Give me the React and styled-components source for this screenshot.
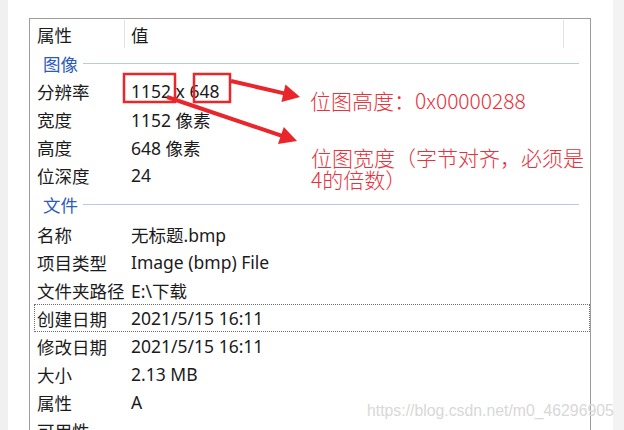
import React from 'react';
import styled, { createGlobalStyle } from 'styled-components';

const Global = createGlobalStyle`
  html, body { margin: 0; padding: 0; background: #fff; }
  body { font-family: "Noto Sans", "Noto Sans CJK SC", sans-serif; }
`;

const Page = styled.div`
  position: relative;
  width: 624px;
  height: 430px;
  overflow: hidden;
  display: flex;
  background: #fff;
`;

const SideStrip = styled.div`
  flex: none;
  width: ${(p) => p.$w}px;
  background: ${(p) => p.$bg};
`;

const Main = styled.div`
  flex: 1;
  min-width: 0;
  padding: 18px 0 0 21px;
`;

const Panel = styled.div`
  box-sizing: border-box;
  width: 562px;
  height: 520px;
  border: 1px solid #9d9d9d;
  border-bottom: none;
  background: #fff;
  font-size: 17.5px;
  color: #1b1b1b;
`;

const HeaderRow = styled.div`
  display: grid;
  grid-template-columns: 94px 439px 1fr;
  height: 30px;
`;

const HeaderCell = styled.div`
  display: flex;
  align-items: center;
  padding-left: ${(p) => (p.$first ? 7 : 6)}px;
  margin: 1px 0;
  border-left: ${(p) => (p.$first ? 'none' : '1px solid #e3e3e3')};
  white-space: nowrap;
`;

const GroupRow = styled.div`
  display: flex;
  align-items: center;
  gap: 5px;
  height: ${(p) => p.$h}px;
  padding: 0 11px 0 13px;
`;

const GroupTitle = styled.span`
  color: #2d5bb9;
  white-space: nowrap;
`;

const GroupLine = styled.div`
  flex: 1;
  height: 1px;
  background: #b7c8e8;
`;

const Row = styled.div`
  position: relative;
  display: grid;
  grid-template-columns: 94px 439px;
  height: 28px;
  align-items: center;
  white-space: nowrap;

  &::after {
    content: '';
    display: ${(p) => (p.$focused ? 'block' : 'none')};
    position: absolute;
    left: 4px;
    right: 0;
    top: 0;
    bottom: 0;
    border: 1px dotted #6e6e6e;
    pointer-events: none;
  }
`;

const NameCell = styled.div`
  padding-left: 7px;
`;

const ValueCell = styled.div`
  padding-left: 7px;
`;

const Overlay = styled.svg`
  position: absolute;
  left: 0;
  top: 0;
  width: 624px;
  height: 430px;
  pointer-events: none;
`;

const Note = styled.div`
  position: absolute;
  left: ${(p) => p.$x}px;
  top: ${(p) => p.$y}px;
  font-family: "Noto Sans CJK SC", sans-serif;
  font-weight: 300;
  font-size: 21px;
  line-height: 22px;
  color: #e8313a;
  white-space: nowrap;
`;

const Watermark = styled.div`
  position: absolute;
  left: 367px;
  top: 402px;
  font-family: "Liberation Sans", Arial, sans-serif;
  font-size: 15.8px;
  color: #d8d8d8;
  white-space: nowrap;
`;

const groups = [
  {
    title: '图像',
    h: 28,
    rows: [
      ['分辨率', '1152 x 648'],
      ['宽度', '1152 像素'],
      ['高度', '648 像素'],
      ['位深度', '24'],
    ],
  },
  {
    title: '文件',
    h: 31,
    rows: [
      ['名称', '无标题.bmp'],
      ['项目类型', 'Image (bmp) File'],
      ['文件夹路径', 'E:\\下载'],
      ['创建日期', '2021/5/15 16:11', true],
      ['修改日期', '2021/5/15 16:11'],
      ['大小', '2.13 MB'],
      ['属性', 'A'],
      ['可用性', ''],
    ],
  },
];

function Arrow({ x1, y1, x2, y2 }) {
  const dx = x2 - x1;
  const dy = y2 - y1;
  const len = Math.hypot(dx, dy);
  const ux = dx / len;
  const uy = dy / len;
  const hl = 17;
  const hw = 9;
  const bx = x2 - ux * hl;
  const by = y2 - uy * hl;
  const px = -uy;
  const py = ux;
  const pts = `${x2},${y2} ${bx + px * hw},${by + py * hw} ${bx - px * hw},${by - py * hw}`;
  return (
    <g>
      <line x1={x1} y1={y1} x2={bx + ux * 2} y2={by + uy * 2} stroke="#e8262b" strokeWidth="4" />
      <polygon points={pts} fill="#e8262b" />
    </g>
  );
}

export default function App() {
  return (
    <>
      <Global />
      <Page>
        <SideStrip $w={8} $bg="#f0f0f0" />
        <Main>
          <Panel>
            <HeaderRow>
              <HeaderCell $first>属性</HeaderCell>
              <HeaderCell>值</HeaderCell>
              <HeaderCell />
            </HeaderRow>
            {groups.map((g) => (
              <React.Fragment key={g.title}>
                <GroupRow $h={g.h}>
                  <GroupTitle>{g.title}</GroupTitle>
                  <GroupLine />
                </GroupRow>
                {g.rows.map(([n, v, f]) => (
                  <Row key={n} $focused={!!f}>
                    <NameCell>{n}</NameCell>
                    <ValueCell>{v}</ValueCell>
                  </Row>
                ))}
              </React.Fragment>
            ))}
          </Panel>
        </Main>
        <SideStrip $w={11} $bg="#f3f3f3" />

        <Overlay viewBox="0 0 624 430">
          <rect x="124" y="74" width="51" height="28" fill="none" stroke="#e8262b" strokeWidth="2.5" />
          <rect x="194" y="74" width="36" height="28" fill="none" stroke="#e8262b" strokeWidth="2.5" />
          <Arrow x1={231} y1={81} x2={300} y2={97} />
          <Arrow x1={167} y1={97} x2={297} y2={141} />
        </Overlay>
        <Note $x={310} $y={89}>位图高度：0x00000288</Note>
        <Note $x={311} $y={146}>
          位图宽度（字节对齐，必须是
          <br />
          4的倍数）
        </Note>
        <Watermark>https://blog.csdn.net/m0_46296905</Watermark>
      </Page>
    </>
  );
}
